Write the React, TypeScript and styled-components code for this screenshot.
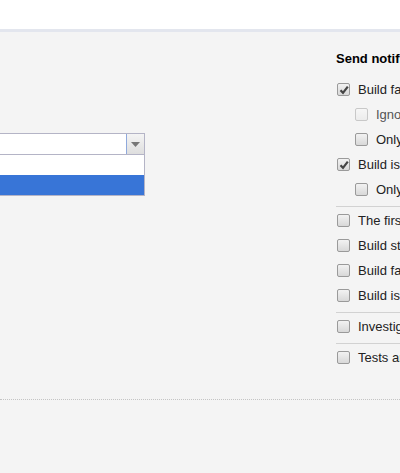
import React from "react";
import styled, { createGlobalStyle } from "styled-components";

const Global = createGlobalStyle`
  html, body { margin: 0; padding: 0; }
  body {
    background: #f4f4f4;
    font-family: Arial, "Liberation Sans", sans-serif;
    font-size: 13px;
    color: #333;
    overflow: hidden;
    width: 400px;
    height: 473px;
  }
`;

const Header = styled.div`
  height: 29px;
  background: #fff;
  border-bottom: 3px solid #e3e6ee;
`;

const Main = styled.div`
  display: flex;
  height: 367px;
  border-bottom: 1px dotted #c4c4c4;
`;

const LeftCol = styled.div`
  width: 336px;
  flex: none;
  padding-top: 101px;
`;

const RightCol = styled.div`
  flex: 1;
  min-width: 0;
  padding-top: 19px;
  white-space: nowrap;
`;

const SelectWrap = styled.div`
  width: 145px;
`;

const SelectBox = styled.div`
  display: flex;
  height: 20px;
  border: 1px solid #b4b4c6;
  border-left: none;
  background: #fff;
  box-sizing: content-box;
`;

const SelectText = styled.div`
  flex: 1;
  border-right: 1px solid #8fa9dc;
`;

const SelectButton = styled.div`
  width: 17px;
  display: flex;
  align-items: center;
  justify-content: center;
  background: linear-gradient(#f4f4f4, #dedede);
`;

const DropList = styled.div`
  border: 1px solid #b4b4c6;
  border-top: none;
  border-left: none;
`;

const Option = styled.div<{ $selected?: boolean }>`
  height: 20px;
  background: ${(p) => (p.$selected ? "#3875d7" : "#fff")};
  color: ${(p) => (p.$selected ? "#fff" : "#333")};
`;

const Title = styled.div`
  font-weight: bold;
  color: #000;
  line-height: 16px;
  margin-bottom: 10px;
`;

const Row = styled.div<{ $indent?: boolean; $disabled?: boolean }>`
  display: flex;
  align-items: center;
  height: 25px;
  padding-left: ${(p) => (p.$indent ? 19 : 1)}px;
  color: ${(p) => (p.$disabled ? "#555" : "#222")};
  gap: 8px;
`;

const Sep = styled.div`
  height: 0;
  border-top: 1px solid #d2d2d2;
  margin: 4px 0 1px;
`;

const Box = styled.span<{ $disabled?: boolean }>`
  width: 11px;
  height: 11px;
  flex: none;
  border: 1px solid ${(p) => (p.$disabled ? "#c8c8c8" : "#9a9a9a")};
  border-radius: 2px;
  background: ${(p) =>
    p.$disabled
      ? "linear-gradient(#f6f6f6, #ececec)"
      : "linear-gradient(#f2f2f2, #d8d8d8)"};
  display: flex;
  align-items: center;
  justify-content: center;
`;

const Check = ({ checked, disabled }: { checked?: boolean; disabled?: boolean }) => (
  <Box $disabled={disabled}>
    {checked && (
      <svg width="10" height="10" viewBox="0 0 10 10">
        <path d="M1.5 5.2 L4 7.8 L8.8 1.6" fill="none" stroke="#444" strokeWidth="2.2" />
      </svg>
    )}
  </Box>
);

const Item = ({
  label,
  checked,
  indent,
  disabled,
}: {
  label: string;
  checked?: boolean;
  indent?: boolean;
  disabled?: boolean;
}) => (
  <Row $indent={indent} $disabled={disabled}>
    <Check checked={checked} disabled={disabled} />
    <span>{label}</span>
  </Row>
);

export default function App() {
  return (
    <>
      <Global />
      <Header />
      <Main>
        <LeftCol>
          <SelectWrap>
            <SelectBox>
              <SelectText />
              <SelectButton>
                <svg width="9" height="5" viewBox="0 0 9 5">
                  <path d="M0 0 H9 L4.5 5 Z" fill="#777" />
                </svg>
              </SelectButton>
            </SelectBox>
            <DropList>
              <Option />
              <Option $selected />
            </DropList>
          </SelectWrap>
        </LeftCol>
        <RightCol>
          <Title>Send notification when:</Title>
          <Item label="Build fails" checked />
          <Item label="Ignore failures not caused by my changes" indent disabled />
          <Item label="Only notify on the first failed build after successful" indent />
          <Item label="Build is successful" checked />
          <Item label="Only notify on the first successful build after failed" indent />
          <Sep />
          <Item label="The first build error occurs" />
          <Item label="Build starts" />
          <Item label="Build fails to start" />
          <Item label="Build is probably hanging" />
          <Sep />
          <Item label="Investigation is updated" />
          <Sep />
          <Item label="Tests are muted or unmuted" />
        </RightCol>
      </Main>
    </>
  );
}
